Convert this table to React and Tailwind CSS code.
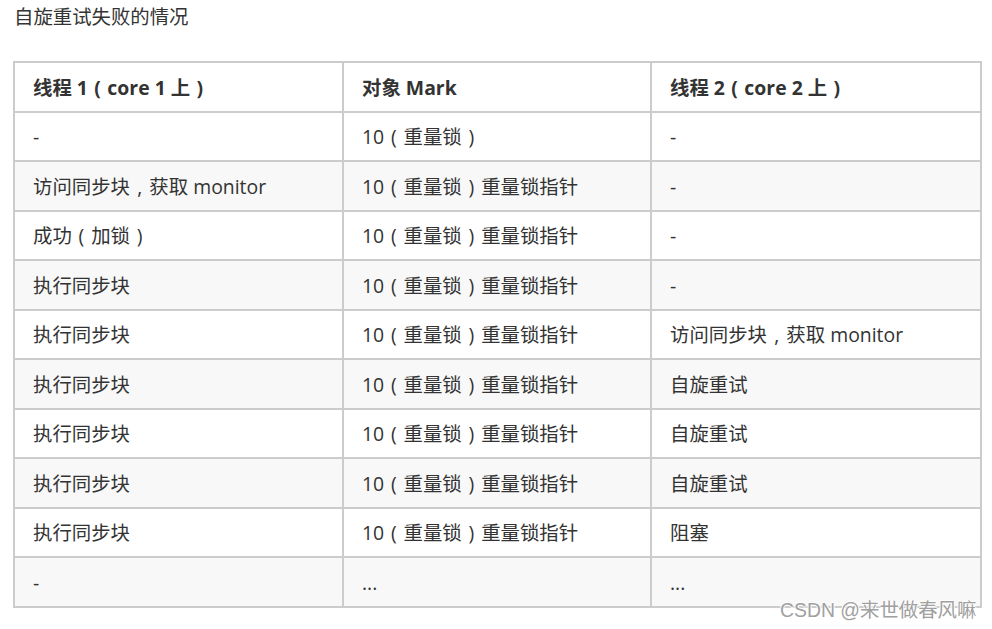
const HEADERS = ['线程 1（core 1 上）', '对象 Mark', '线程 2（core 2 上）'];

const ROWS = [
  ['-', '10（重量锁）', '-'],
  ['访问同步块，获取 monitor', '10（重量锁）重量锁指针', '-'],
  ['成功（加锁）', '10（重量锁）重量锁指针', '-'],
  ['执行同步块', '10（重量锁）重量锁指针', '-'],
  ['执行同步块', '10（重量锁）重量锁指针', '访问同步块，获取 monitor'],
  ['执行同步块', '10（重量锁）重量锁指针', '自旋重试'],
  ['执行同步块', '10（重量锁）重量锁指针', '自旋重试'],
  ['执行同步块', '10（重量锁）重量锁指针', '自旋重试'],
  ['执行同步块', '10（重量锁）重量锁指针', '阻塞'],
  ['-', '...', '...'],
];

const fontStack = { fontFamily: '"Open Sans", "Noto Sans CJK SC", sans-serif' };

// full-width punctuation is drawn centred in its em box, as in the source page
const PUNCT = { '（': '(', '）': ')', '，': ',' };

const renderText = (s) =>
  Array.from(s).map((ch, i) =>
    PUNCT[ch] ? (
      <span key={i} className="inline-block w-[1em] text-center">
        {PUNCT[ch]}
      </span>
    ) : (
      ch
    )
  );

const App = () => {
  return (
    <div className="relative w-[992px] h-[629px] bg-white overflow-hidden text-[#333]" style={fontStack}>
      <div className="pl-[14px] h-[34px] leading-[34px] text-[19.4px]">自旋重试失败的情况</div>
      <div className="mt-[27px] ml-[13px] w-[969px] border-l-2 border-t-2 border-[#ccc]">
        <div className="grid grid-cols-[329px_308px_330px] h-[50px]">
          {HEADERS.map((h, i) => (
            <div
              key={i}
              className="flex items-center pl-[18px] pt-px border-r-2 border-b-2 border-[#ccc] text-[19.4px] font-bold whitespace-pre"
            >
              <span>{renderText(h)}</span>
            </div>
          ))}
        </div>
        {ROWS.map((row, r) => (
          <div
            key={r}
            className={`grid grid-cols-[329px_308px_330px] ${r % 2 === 0 ? 'h-[49px] bg-white' : 'h-[50px] bg-[#f8f8f8]'}`}
          >
            {row.map((c, i) => (
              <div
                key={i}
                className="flex items-center pl-[18px] pt-px border-r-2 border-b-2 border-[#ccc] text-[19.4px] whitespace-pre"
              >
                <span>{renderText(c)}</span>
              </div>
            ))}
          </div>
        ))}
      </div>
      <div
        className="absolute left-[780px] top-[597px] text-[19.4px] leading-[26px] text-[#a0a0a0] whitespace-nowrap"
        style={{
          fontFamily: '"Liberation Sans", "Noto Sans CJK SC", sans-serif',
          textShadow: '1px 0 #fff, -1px 0 #fff, 0 1px #fff, 0 -1px #fff',
        }}
      >
        CSDN @来世做春风嘛
      </div>
    </div>
  );
};

export default App;
